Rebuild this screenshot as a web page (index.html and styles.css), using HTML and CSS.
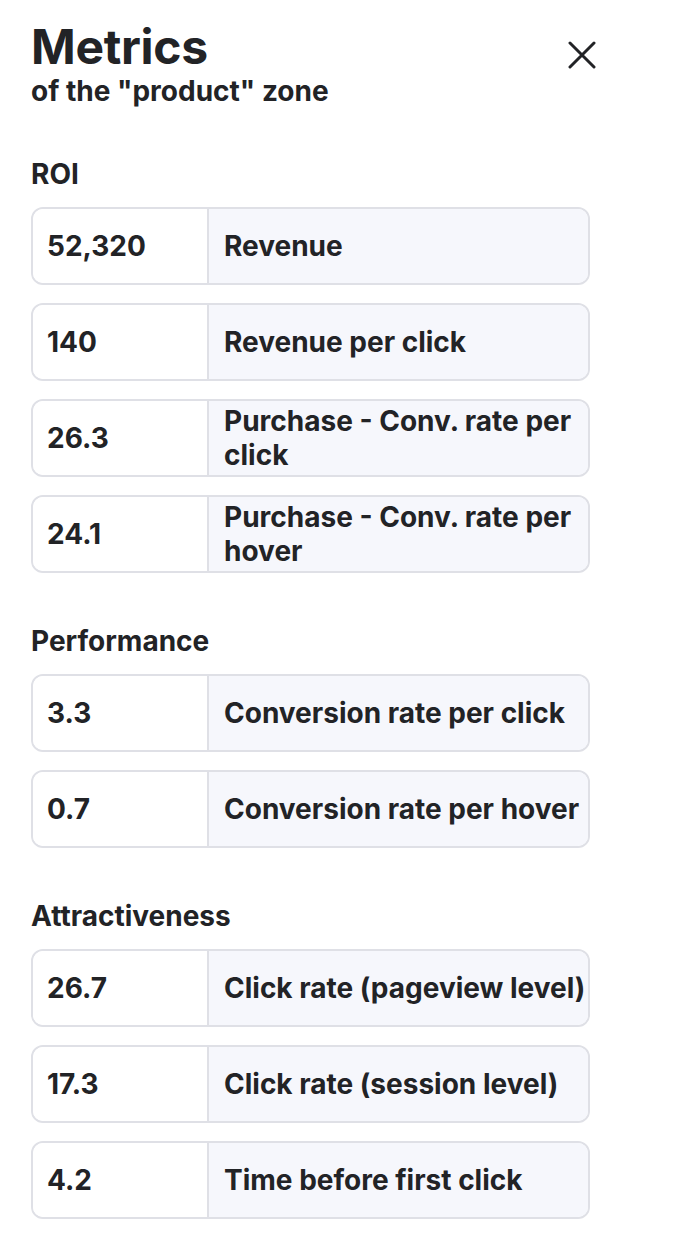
FILE: index.html
```html
<!DOCTYPE html>
<html lang="en">

<head>
    <meta charset="UTF-8">
    <meta name="viewport" content="width=device-width, initial-scale=1.0">
    <title>Metrics</title>
    <link rel="stylesheet" href="styles.css">
</head>

<body>
    <div class="panel">
        <div class="head">
            <div>
                <h1 class="title">Metrics</h1>
                <div class="subtitle">of the "product" zone</div>
            </div>
            <button class="close" aria-label="Close">
                <svg width="28" height="28" viewBox="0 0 28 28">
                    <path d="M2 2 L26 26 M26 2 L2 26" stroke="#222326" stroke-width="3" stroke-linecap="round" fill="none" />
                </svg>
            </button>
        </div>

        <div class="group">
            <h2 class="group-title">ROI</h2>
            <div class="metric"><div class="value">52,320</div><div class="label">Revenue</div></div>
            <div class="metric"><div class="value">140</div><div class="label">Revenue per click</div></div>
            <div class="metric"><div class="value">26.3</div><div class="label">Purchase - Conv. rate per click</div></div>
            <div class="metric"><div class="value">24.1</div><div class="label">Purchase - Conv. rate per hover</div></div>
        </div>

        <div class="group">
            <h2 class="group-title">Performance</h2>
            <div class="metric"><div class="value">3.3</div><div class="label">Conversion rate per click</div></div>
            <div class="metric"><div class="value">0.7</div><div class="label">Conversion rate per hover</div></div>
        </div>

        <div class="group">
            <h2 class="group-title">Attractiveness</h2>
            <div class="metric"><div class="value">26.7</div><div class="label">Click rate (pageview level)</div></div>
            <div class="metric"><div class="value">17.3</div><div class="label">Click rate (session level)</div></div>
            <div class="metric"><div class="value">4.2</div><div class="label">Time before first click</div></div>
        </div>
    </div>
</body>

</html>
```

FILE: styles.css
```css
body {
    margin: 0;
    background: #ffffff;
    color: #222326;
    font-family: Inter, "Noto Sans", sans-serif;
}

.panel {
    width: 559px;
    padding: 20px 0 40px 31px;
}

.head {
    display: flex;
    justify-content: space-between;
    align-items: flex-start;
}

.title {
    margin: 0;
    font-size: 48px;
    line-height: 54px;
    font-weight: 700;
    letter-spacing: -0.3px;
}

.subtitle {
    font-size: 28px;
    line-height: 34px;
    font-weight: 700;
}

.close {
    border: none;
    background: none;
    padding: 0;
    margin: 21px -6px 0 0;
    width: 28px;
    height: 28px;
    cursor: pointer;
}

.group {
    display: flex;
    flex-direction: column;
    gap: 18px;
    margin-bottom: 53px;
}

.head + .group {
    margin-top: 51px;
}

.group-title {
    margin: 0;
    font-size: 28px;
    line-height: 30px;
    font-weight: 700;
}

.metric {
    display: grid;
    grid-template-columns: 176px 1fr;
    height: 78px;
    box-sizing: border-box;
    border: 2px solid #dfe0e6;
    border-radius: 12px;
    overflow: hidden;
    font-size: 28px;
    line-height: 34px;
    font-weight: 700;
}

.value {
    display: flex;
    align-items: center;
    padding-left: 14px;
    border-right: 2px solid #dfe0e6;
    background: #ffffff;
}

.label {
    display: flex;
    align-items: center;
    padding: 0 0 0 15px;
    background: #f6f7fc;
}
```
